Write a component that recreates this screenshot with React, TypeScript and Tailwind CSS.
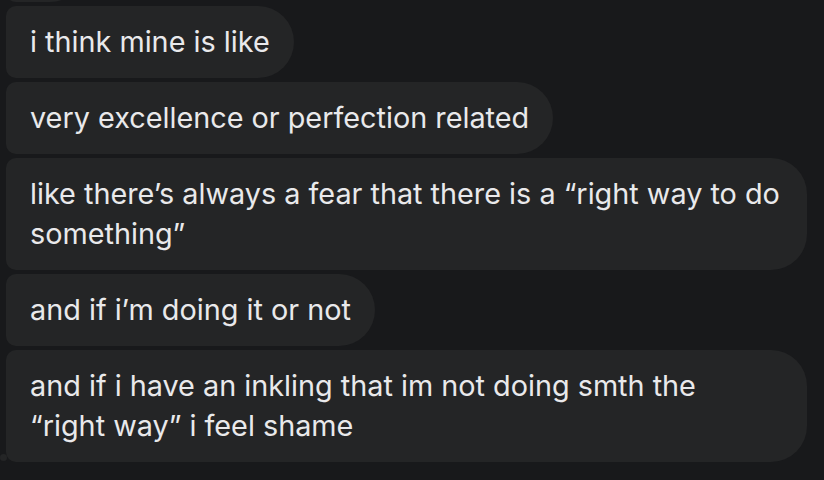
const messages = [
  'i think mine is like',
  'very excellence or perfection related',
  'like there\u2019s always a fear that there is a \u201cright way to do something\u201d',
  'and if i\u2019m doing it or not',
  'and if i have an inkling that im not doing smth the \u201cright\u00a0way\u201d i feel shame',
];

function Bubble({ text, last }: { text: string; last?: boolean }) {
  return (
    <div className="relative w-fit max-w-[801px]">
      {last && (
        <>
          {/* tail */}
          <div className="absolute left-[0px] bottom-[4px] h-[22px] w-[24px] rounded-full bg-[#242526]" />
          <div className="absolute -left-[6px] bottom-[1px] h-[7px] w-[7px] rounded-full bg-[#242526]" />
        </>
      )}
      <div className="relative rounded-l-[10px] rounded-r-[36px] bg-[#242526] pl-[24px] pr-[24px] py-[16px] text-[28.8px] leading-[40px] text-[#e9e9eb]">
        {text}
      </div>
    </div>
  );
}

export default function App() {
  return (
    <div
      className="h-[480px] w-[824px] overflow-hidden bg-[#18191b] px-[6px]"
      style={{ fontFamily: 'Inter, "Noto Sans", sans-serif' }}
    >
      <div className="-mt-[70px] flex flex-col gap-[4px]">
        {/* previous bubble, cut off */}
        <div className="h-[72px] w-[80px] rounded-l-[10px] rounded-r-[36px] bg-[#242526]" />
        {messages.map((m, i) => (
          <Bubble key={i} text={m} last={i === messages.length - 1} />
        ))}
      </div>
    </div>
  );
}
